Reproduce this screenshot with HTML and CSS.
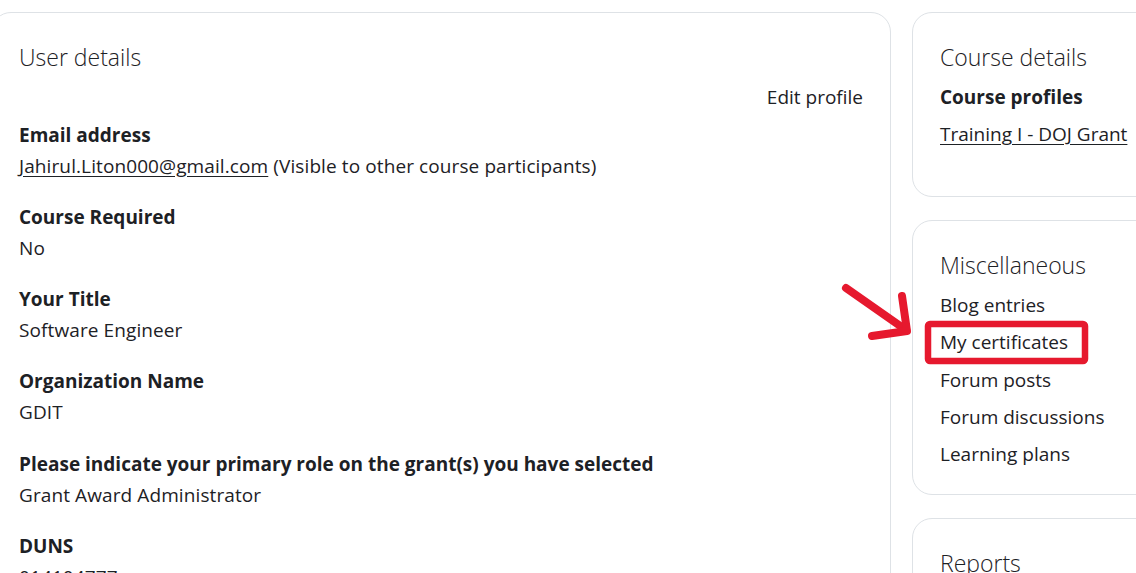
FILE: index.html
```html
<!DOCTYPE html>
<html lang="en">
<head>
<meta charset="utf-8">
<title>Profile</title>
<link rel="stylesheet" href="styles.css">
</head>
<body>
<div class="page">
  <section class="card main-card">
    <h3 class="card-title">User details</h3>
    <div class="edit-row"><a class="plain-link" href="#">Edit profile</a></div>
    <dl class="details">
      <dt>Email address</dt>
      <dd><a class="ulink" href="#">Jahirul.Liton000@gmail.com</a> (Visible to other course participants)</dd>
      <dt>Course Required</dt>
      <dd>No</dd>
      <dt>Your Title</dt>
      <dd>Software Engineer</dd>
      <dt>Organization Name</dt>
      <dd>GDIT</dd>
      <dt>Please indicate your primary role on the grant(s) you have selected</dt>
      <dd>Grant Award Administrator</dd>
      <dt>DUNS</dt>
      <dd>014104777</dd>
    </dl>
  </section>
  <aside class="side">
    <section class="card course-card">
      <h3 class="card-title">Course details</h3>
      <dl class="course-dl">
        <dt>Course profiles</dt>
        <dd><a class="ulink" href="#">Training I - DOJ Grant</a></dd>
      </dl>
    </section>
    <section class="card misc-card">
      <h3 class="card-title">Miscellaneous</h3>
      <ul class="links">
        <li><a class="plain-link" href="#">Blog entries</a></li>
        <li><a class="plain-link" href="#">My certificates</a></li>
        <li><a class="plain-link" href="#">Forum posts</a></li>
        <li><a class="plain-link" href="#">Forum discussions</a></li>
        <li><a class="plain-link" href="#">Learning plans</a></li>
      </ul>
    </section>
    <section class="card reports-card">
      <h3 class="card-title">Reports</h3>
    </section>
  </aside>
</div>
<svg class="annotation" width="1136" height="573" viewBox="0 0 1136 573" aria-hidden="true">
  <g fill="none" stroke="#e6192e" stroke-linecap="round" stroke-linejoin="round">
    <path d="M846 288 L906 330" stroke-width="8"/>
    <path d="M902 296 L907 331 L872 336" stroke-width="8"/>
    <rect x="928" y="324" width="157" height="37" rx="2" stroke-width="6.5"/>
  </g>
</svg>
</body>
</html>
```
FILE: styles.css
```css
html, body {
  margin: 0;
  padding: 0;
  background: #ffffff;
  overflow: hidden;
  width: 1136px;
  height: 573px;
}
body {
  font-family: "Open Sans", "Noto Sans", "Liberation Sans", sans-serif;
  font-size: 19px;
  color: #1d2125;
  position: relative;
}
.page {
  display: flex;
  align-items: flex-start;
  gap: 21px;
  padding-top: 12px;
  margin-left: -9px;
}
.card {
  box-sizing: border-box;
  border: 1px solid #dee2e6;
  border-radius: 20px;
  background: #fff;
  padding: 24px 27px 22px 27px;
  flex-shrink: 0;
}
.main-card {
  width: 900px;
  height: 700px;
}
.side {
  display: flex;
  flex-direction: column;
  gap: 23px;
  width: 420px;
  flex-shrink: 0;
}
.card-title {
  margin: 0;
  font-size: 23px;
  font-weight: 300;
  line-height: 40px;
}
.edit-row {
  text-align: right;
  margin-top: 5px;
  line-height: 30px;
}
.plain-link {
  color: #1d2125;
  text-decoration: none;
}
.ulink {
  color: #1d2125;
  text-decoration: underline;
  text-underline-offset: 3px;
}
.details {
  margin: 7.5px 0 0 0;
}
.details dt {
  font-weight: 700;
  line-height: 31px;
}
.details dd {
  margin: 0 0 20.3px 0;
  line-height: 31px;
  letter-spacing: 0.1px;
}
.course-card {
  height: 185px;
}
.course-dl {
  margin: 5px 0 0 0;
}
.course-dl dt {
  font-weight: 700;
  line-height: 31px;
}
.course-dl dd {
  margin: 6px 0 0 0;
  line-height: 31px;
  white-space: nowrap;
}
.misc-card {
  height: 275px;
}
.links {
  list-style: none;
  margin: 2px 0 0 0;
  padding: 0;
}
.links li {
  line-height: 37.3px;
  white-space: nowrap;
}
.reports-card {
  height: 200px;
}
.annotation {
  position: absolute;
  left: 0;
  top: 0;
  pointer-events: none;
}
```
